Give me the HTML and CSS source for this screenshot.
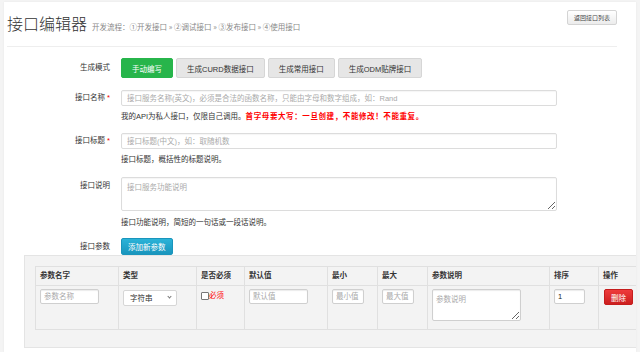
FILE: index.html
```html
<!DOCTYPE html>
<html lang="zh-CN">
<head>
<meta charset="utf-8">
<title>接口编辑器</title>
<link rel="stylesheet" href="styles.css">
</head>
<body>
<div class="page">
  <header class="head">
    <h1 class="title">接口编辑器<small class="flow">开发流程：①开发接口 » ②调试接口 » ③发布接口 » ④使用接口</small></h1>
    <button class="btn-back" type="button">返回接口列表</button>
  </header>
  <form class="form">
    <div class="field f-mode">
      <label class="lbl">生成模式</label>
      <div class="ctl btns">
        <button type="button" class="mbtn on">手动编写</button>
        <button type="button" class="mbtn">生成CURD数据接口</button>
        <button type="button" class="mbtn">生成常用接口</button>
        <button type="button" class="mbtn">生成ODM贴牌接口</button>
      </div>
    </div>
    <div class="field f-name">
      <label class="lbl">接口名称 <span class="req">*</span></label>
      <div class="ctl">
        <input class="inp" type="text" placeholder="接口服务名称(英文)，必须是合法的函数名称，只能由字母和数字组成，如：Rand">
        <p class="help">我的API为私人接口，仅限自己调用。<b class="warn">首字母要大写：一旦创建，不能修改！不能重复。</b></p>
      </div>
    </div>
    <div class="field f-title">
      <label class="lbl">接口标题 <span class="req">*</span></label>
      <div class="ctl">
        <input class="inp" type="text" placeholder="接口标题(中文)，如：取随机数">
        <p class="help">接口标题，概括性的标题说明。</p>
      </div>
    </div>
    <div class="field f-desc">
      <label class="lbl">接口说明</label>
      <div class="ctl">
        <textarea class="inp ta" placeholder="接口服务功能说明"></textarea>
        <p class="help">接口功能说明，简短的一句话或一段话说明。</p>
      </div>
    </div>
    <div class="field f-params">
      <label class="lbl">接口参数</label>
      <div class="ctl"><button type="button" class="btn-add">添加新参数</button></div>
    </div>
    <div class="panel">
      <table class="params">
        <colgroup>
          <col class="c1"><col class="c2"><col class="c3"><col class="c4"><col class="c5"><col class="c6"><col class="c7"><col class="c8"><col class="c9">
        </colgroup>
        <thead>
          <tr><th>参数名字</th><th>类型</th><th>是否必须</th><th>默认值</th><th>最小</th><th>最大</th><th>参数说明</th><th>排序</th><th>操作</th></tr>
        </thead>
        <tbody>
          <tr>
            <td><input class="sinp w-name" type="text" placeholder="参数名称"></td>
            <td><span class="selwrap"><select class="sel"><option>字符串</option></select></span></td>
            <td><label class="must"><input type="checkbox" class="chk">必须</label></td>
            <td><input class="sinp w-name" type="text" placeholder="默认值"></td>
            <td><input class="sinp w-num" type="text" placeholder="最小值"></td>
            <td><input class="sinp w-num" type="text" placeholder="最大值"></td>
            <td><textarea class="sinp sta" placeholder="参数说明"></textarea></td>
            <td><input class="sinp w-ord" type="text" value="1"></td>
            <td><button type="button" class="btn-del">删除</button></td>
          </tr>
        </tbody>
      </table>
    </div>
  </form>
</div>
</body>
</html>
```

FILE: styles.css
```css
html, body {
  margin: 0;
  padding: 0;
  height: 352px;
  overflow: hidden;
}
body {
  background: #f4f4f4;
  font-family: "Liberation Sans", "Noto Sans CJK SC", sans-serif;
  color: #333;
  font-size: 7.5px;
}
.page {
  margin: 2px 4px 0 4px;
  height: 350px;
  background: #fff;
  box-shadow: 0 0 2px rgba(0,0,0,0.06);
}
.head {
  margin: 0 19px 0 3px;
  height: 44px;
  border-bottom: 1px solid #eeeeee;
  display: flex;
  justify-content: space-between;
  align-items: flex-start;
}
.title {
  margin: 11px 0 0 0;
  font-size: 16px;
  line-height: 20px;
  font-weight: 300;
  color: #333;
  font-family: "Noto Sans CJK SC", sans-serif;
}
.flow {
  font-size: 7.5px;
  color: #888;
  margin-left: 5px;
  font-weight: normal;
}
.btn-back {
  margin-top: 8px;
  height: 15px;
  padding: 0 6px;
  font-size: 6px;
  font-family: inherit;
  color: #444;
  background: linear-gradient(#ffffff, #ececec);
  border: 1px solid #d4d4d4;
  border-radius: 2px;
}
.form {
  padding-left: 3px;
}
.field {
  display: flex;
  align-items: flex-start;
}
.lbl {
  width: 103px;
  flex: none;
  text-align: right;
  margin-right: 11px;
  color: #333;
}
.req { color: #e00; }
.ctl { flex: none; }
.f-mode { margin-top: 11px; }
.f-mode .lbl { line-height: 20px; }
.btns { display: flex; }
.mbtn {
  height: 20px;
  padding: 0 10px;
  margin-right: 3px;
  font-size: 7.5px;
  font-family: inherit;
  color: #333;
  background: #e6e6e6;
  border: 1px solid #d6d6d6;
  border-radius: 2px;
}
.mbtn.on {
  background: #27b54b;
  border-color: #27b54b;
  color: #fff;
}
.f-name { margin-top: 12px; }
.f-title { margin-top: 10px; }
.f-desc { margin-top: 11px; }
.f-params { margin-top: 9px; }
.f-name .lbl, .f-title .lbl { line-height: 16px; }
.f-desc .lbl { line-height: 17px; }
.f-params .lbl { line-height: 17px; }
.inp {
  display: block;
  box-sizing: border-box;
  width: 436px;
  height: 16px;
  margin: 0;
  padding: 0 5px;
  font-size: 7.5px;
  font-family: inherit;
  color: #333;
  border: 1px solid #dcdcdc;
  border-radius: 2px;
  box-shadow: inset 0 1px 1px rgba(0,0,0,0.04);
  background: #fff;
}
.inp::placeholder, .sinp::placeholder { color: #aaa; }
.ta {
  height: 34px;
  padding-top: 3px;
  resize: vertical;
}
.help {
  margin: 5px 0 0 0;
  line-height: 12px;
  color: #333;
}
.f-desc .help { margin-top: 6px; }
.warn { color: #f00; font-weight: bold; letter-spacing: 0.6px; }
.btn-add {
  height: 17px;
  padding: 0 6px;
  font-size: 7.5px;
  font-family: inherit;
  color: #fff;
  background: linear-gradient(#2bb3d8, #1995bd);
  border: 1px solid #1a95bc;
  border-radius: 2px;
}
.panel {
  margin: 0 0 0 17px;
  height: 93px;
  box-sizing: border-box;
  background: #f3f3f3;
  border: 1px solid #e4e4e4;
  border-right: none;
  padding: 10px 0 0 10px;
  overflow: hidden;
}
.params {
  table-layout: fixed;
  border-collapse: collapse;
  width: 610px;
  border: 1px solid #e0e0e0;
}
.c1 { width: 83px; }
.c2 { width: 78px; }
.c3 { width: 48px; }
.c4 { width: 83px; }
.c5 { width: 50px; }
.c6 { width: 50px; }
.c7 { width: 122px; }
.c8 { width: 49px; }
.c9 { width: 47px; }
.params th, .params td {
  border: 1px solid #e0e0e0;
  text-align: left;
  vertical-align: top;
}
.params th {
  height: 18px;
  line-height: 18px;
  padding: 0 4px;
  font-weight: bold;
  font-size: 7.5px;
  color: #333;
}
.params td {
  height: 40px;
  padding: 3px 4px 0 4px;
}
.sinp {
  display: block;
  box-sizing: border-box;
  height: 15px;
  margin: 0;
  padding: 0 3px;
  font-size: 7.5px;
  font-family: inherit;
  color: #222;
  background: #fff;
  border: 1px solid #cfcfcf;
  border-radius: 2px;
  box-shadow: inset 0 1px 1px rgba(0,0,0,0.08);
}
.w-name { width: 59px; }
.w-num { width: 32px; }
.w-ord { width: 31px; }
.sta {
  width: 89px;
  height: 32px;
  padding-top: 3px;
  resize: vertical;
}
.selwrap {
  display: block;
  position: relative;
  width: 54px;
  margin-top: 1px;
}
.sel {
  appearance: none;
  -webkit-appearance: none;
  display: block;
  box-sizing: border-box;
  width: 54px;
  height: 16px;
  padding: 0 6px;
  font-size: 7.5px;
  font-family: inherit;
  color: #333;
  background: #fff;
  border: 1px solid #d6d6d6;
  border-radius: 2px;
}
.selwrap::after {
  content: "";
  position: absolute;
  right: 6px;
  top: 5px;
  width: 2px;
  height: 2px;
  border-right: 1px solid #777;
  border-bottom: 1px solid #777;
  transform: rotate(45deg);
}
.must {
  display: flex;
  align-items: center;
  margin-top: 1px;
  color: #f00;
  font-size: 7.5px;
  line-height: 12px;
}
.chk {
  appearance: none;
  -webkit-appearance: none;
  width: 8px;
  height: 8px;
  margin: 0;
  box-sizing: border-box;
  border: 1px solid #777;
  border-radius: 1px;
  background: #fff;
}
.btn-del {
  display: block;
  height: 16px;
  padding: 0 6px;
  margin-left: 1px;
  font-size: 7.5px;
  font-family: inherit;
  color: #fff;
  background: linear-gradient(#ee3b3b, #cc1f1f);
  border: 1px solid #c51d1d;
  border-radius: 2px;
}
```
